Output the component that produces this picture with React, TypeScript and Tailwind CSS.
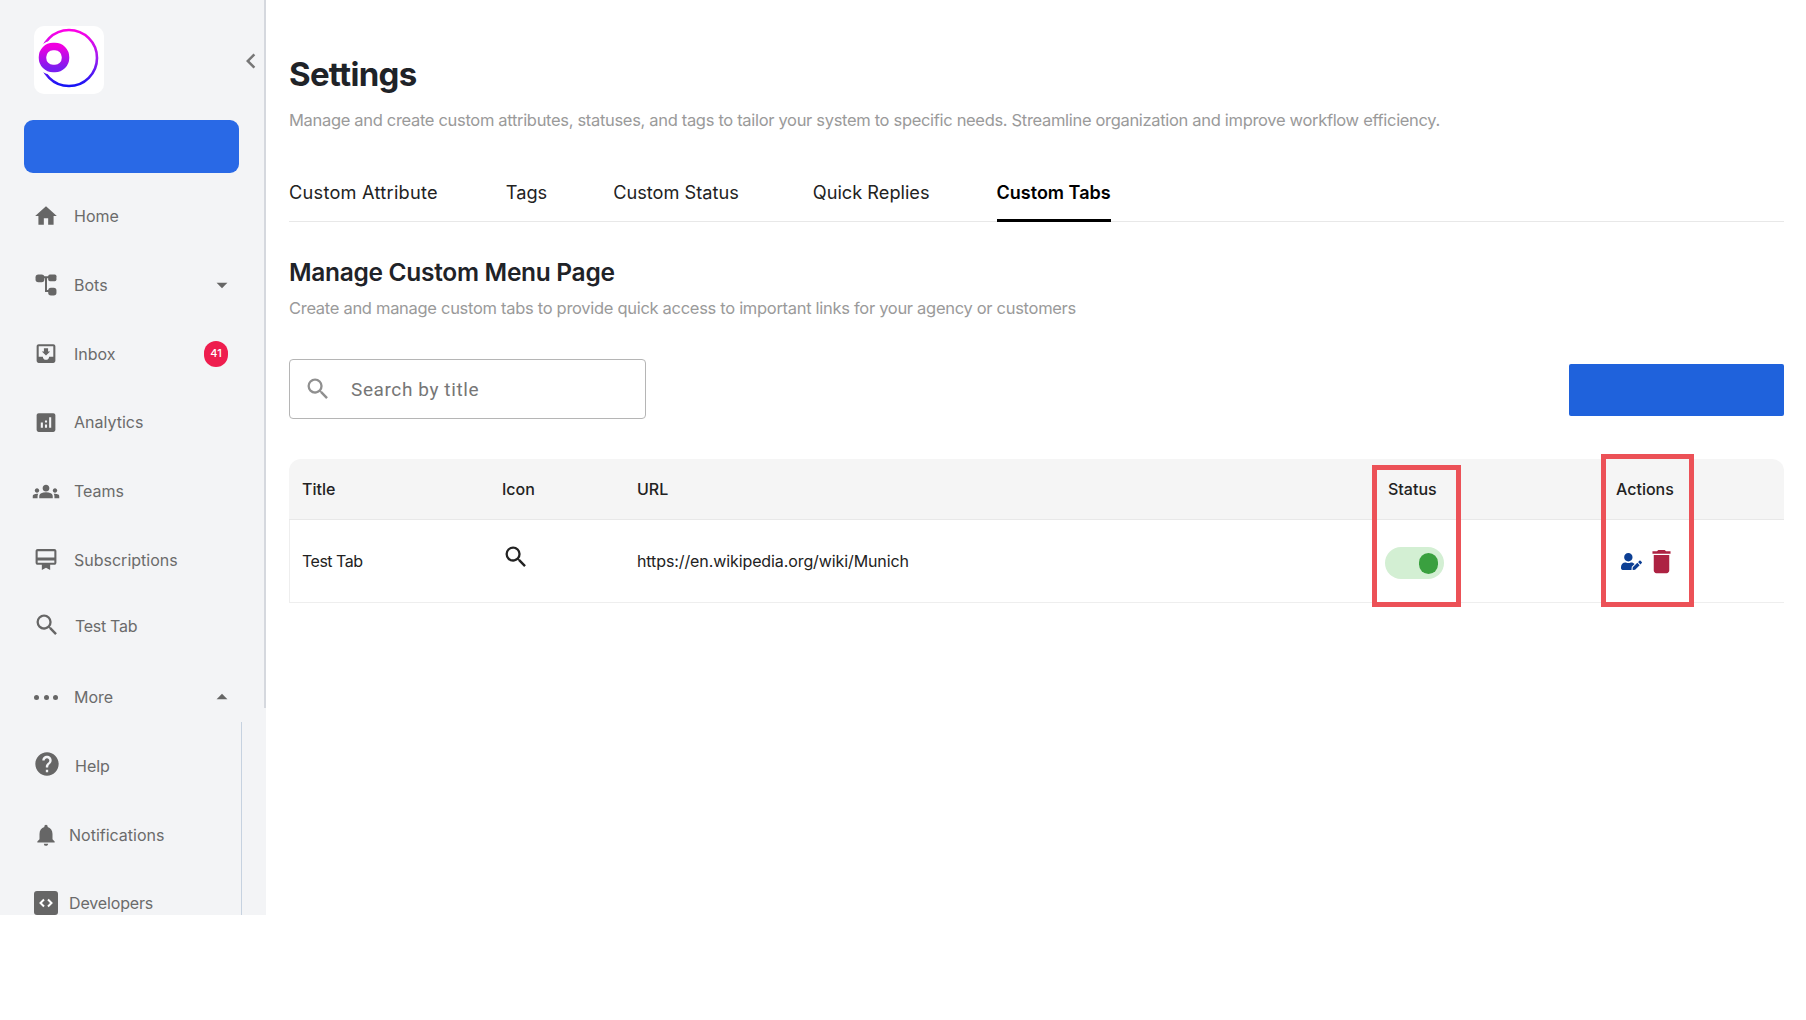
import type { ReactNode } from "react"
import {
  MdHome,
  MdMoveToInbox,
  MdAnalytics,
  MdGroups,
  MdCardMembership,
  MdSearch,
  MdHelp,
  MdNotifications,
  MdArrowDropDown,
  MdArrowDropUp,
  MdChevronLeft,
  MdDelete,
} from "react-icons/md"
import { FaUserEdit } from "react-icons/fa"

/* ─── Drawn icons ────────────────────────────────────────────────────────── */

function Logo() {
  return (
    <svg viewBox="0 0 70 68" className="h-[68px] w-[70px]">
      <defs>
        <linearGradient id="ring" x1="0" y1="0" x2="0" y2="1">
          <stop offset="0" stopColor="#ff00e6" />
          <stop offset="0.5" stopColor="#a01cf0" />
          <stop offset="1" stopColor="#1414f5" />
        </linearGradient>
        <linearGradient id="dot" x1="0" y1="0" x2="0" y2="1">
          <stop offset="0" stopColor="#f000e0" />
          <stop offset="1" stopColor="#7a1ef0" />
        </linearGradient>
      </defs>
      <circle cx="35" cy="32" r="28" fill="none" stroke="url(#ring)" strokeWidth="2.6" />
      <rect x="3" y="15" width="34" height="34" rx="15" fill="#fff" />
      <rect x="8.5" y="20.5" width="23" height="22" rx="10.5" fill="none" stroke="url(#dot)" strokeWidth="7.5" />
    </svg>
  )
}

function BotsIcon() {
  return (
    <svg viewBox="0 0 20 20" className="h-[22px] w-[22px]" fill="#666">
      <rect x="0.5" y="0.5" width="8" height="7" rx="2.5" />
      <rect x="12" y="0.5" width="7.5" height="6" rx="1.5" />
      <rect x="12" y="12.5" width="7.5" height="7" rx="2.5" />
      <path d="M8 3h5M10 3v12.5h3" fill="none" stroke="#666" strokeWidth="1.8" />
    </svg>
  )
}

function MoreIcon() {
  return (
    <span className="flex w-6 items-center justify-between">
      <span className="h-[5px] w-[5px] rounded-full bg-[#666]" />
      <span className="h-[5px] w-[5px] rounded-full bg-[#666]" />
      <span className="h-[5px] w-[5px] rounded-full bg-[#666]" />
    </span>
  )
}

function DevelopersIcon() {
  return (
    <svg viewBox="0 0 24 24" className="h-6 w-6">
      <rect width="24" height="24" rx="3" fill="#666" />
      <path d="M10 8.5 6.5 12l3.5 3.5M14 8.5l3.5 3.5-3.5 3.5" fill="none" stroke="#fff" strokeWidth="2" />
    </svg>
  )
}

/* ─── Sidebar ────────────────────────────────────────────────────────────── */

type NavItem = {
  label: string
  icon: ReactNode
  rowClass: string
  after?: ReactNode
}

const navItems: NavItem[] = [
  { label: "Home", icon: <MdHome size={26} color="#666" />, rowClass: "pl-[74px]" },
  { label: "Bots", icon: <BotsIcon />, rowClass: "pl-[74px]", after: <MdArrowDropDown size={26} color="#666" /> },
  {
    label: "Inbox",
    icon: <MdMoveToInbox size={25} color="#666" />,
    rowClass: "pl-[74px]",
    after: (
      <span className="mr-[7px] flex h-[26px] w-6 items-center justify-center rounded-full bg-[#ee1d4e] text-[11px] font-medium text-white">
        41
      </span>
    ),
  },
  { label: "Analytics", icon: <MdAnalytics size={25} color="#666" />, rowClass: "pl-[74px]" },
  { label: "Teams", icon: <MdGroups size={27} color="#666" />, rowClass: "pl-[74px]" },
  { label: "Subscriptions", icon: <MdCardMembership size={25} color="#666" />, rowClass: "pl-[74px]" },
  {
    label: "Test Tab",
    icon: <MdSearch size={28} color="#666" className="translate-x-px -translate-y-px" />,
    rowClass: "-mt-[2px] mb-[2px] pl-[75px] tracking-[-0.3px]",
  },
  { label: "More", icon: <MoreIcon />, rowClass: "pl-[74px]", after: <MdArrowDropUp size={26} color="#666" /> },
  {
    label: "Help",
    icon: <MdHelp size={28} color="#666" className="translate-x-px -translate-y-[2px]" />,
    rowClass: "pl-[75px]",
  },
  { label: "Notifications", icon: <MdNotifications size={26} color="#666" />, rowClass: "pl-[69px]" },
  { label: "Developers", icon: <DevelopersIcon />, rowClass: "pl-[69px] tracking-[-0.15px]" },
]

function Sidebar() {
  return (
    <aside className="relative h-[915px] w-[266px] shrink-0 overflow-hidden bg-[#f3f4f6]">
      <div className="absolute right-0 top-0 h-[708px] w-[2px] bg-[#d5d8de]" />
      <div className="absolute left-[241px] top-[722px] bottom-0 w-px bg-[#c6d2e0]" />

      <div className="flex h-[120px] items-start pl-[34px] pt-[26px]">
        <div className="rounded-[10px] bg-white">
          <Logo />
        </div>
        <MdChevronLeft size={30} color="#777" className="ml-[132px] mt-5" />
      </div>

      <div className="ml-6 h-[53px] w-[215px] rounded-[9px] bg-[#2969e6]" />

      <nav className="flex flex-col pt-[9px]">
        {navItems.map((item) => (
          <div
            key={item.label}
            className={`relative flex h-[68.7px] items-center pr-[31px] text-base text-[#6b6b6b] ${item.rowClass}`}
          >
            <span className="absolute left-[46px] flex -translate-x-1/2 items-center justify-center">
              {item.icon}
            </span>
            <span className="flex-1">{item.label}</span>
            {item.after}
          </div>
        ))}
      </nav>
    </aside>
  )
}

/* ─── Main ───────────────────────────────────────────────────────────────── */

const tabs = [
  { label: "Custom Attribute", className: "mr-[68px] pb-[10px] tracking-[0.25px]" },
  { label: "Tags", className: "mr-[66px] pb-[10px]" },
  { label: "Custom Status", className: "mr-[74px] pb-[10px]" },
  { label: "Quick Replies", className: "mr-[67px] pb-[10px]" },
  { label: "Custom Tabs", className: "border-b-[3px] border-black pb-[7px] text-lg font-semibold text-black" },
]

function StatusToggle() {
  return (
    <div className="mt-1 flex h-8 w-[59px] items-center justify-end rounded-full bg-[#d3efd3] pr-[6px]">
      <span className="h-[21px] w-[19px] rounded-full bg-[#3aa03f]" />
    </div>
  )
}

function TabsTable() {
  return (
    <div className="relative mt-[40px]">
      <div className="grid h-[61px] grid-cols-[200px_135px_751px_228px_1fr] items-center rounded-t-xl border-b border-[#e8e8e8] bg-[#f5f5f5] pl-[13px] text-base font-medium text-[#222]">
        <div>Title</div>
        <div>Icon</div>
        <div>URL</div>
        <div>Status</div>
        <div>Actions</div>
      </div>
      <div className="grid h-[83px] grid-cols-[200px_135px_751px_228px_1fr] items-center border-b border-l border-[#eeeeee] pl-[12px] text-base text-[#222]">
        <div className="tracking-[-0.5px]">Test Tab</div>
        <div className="-mt-2">
          <MdSearch size={28} color="#222" />
        </div>
        <div className="tracking-[-0.1px]">https://en.wikipedia.org/wiki/Munich</div>
        <div className="-ml-[3px]">
          <StatusToggle />
        </div>
        <div className="flex items-center gap-[10px] pl-[5px]">
          <FaUserEdit size={21} color="#0d3f94" />
          <MdDelete size={31} color="#ad2242" className="-ml-[6px]" />
        </div>
      </div>

      {/* red annotation boxes */}
      <div className="absolute left-[1083px] top-[6px] h-[142px] w-[89px] border-[5px] border-[#ec5157]" />
      <div className="absolute left-[1312px] top-[-5px] h-[153px] w-[93px] border-[5px] border-[#ec5157]" />
    </div>
  )
}

export default function App() {
  return (
    <div className="flex min-h-[1020px] bg-white font-['Inter',sans-serif]">
      <Sidebar />
      <main className="ml-[23px] w-[1495px] pt-[51px]">
        <h1 className="text-[33px] font-bold leading-[46px] tracking-[-0.7px] text-[#1f2328]">Settings</h1>
        <p className="mt-[11px] text-[16.5px] leading-[24px] tracking-[-0.32px] text-[#9a9a9a]">
          Manage and create custom attributes, statuses, and tags to tailor your system to specific needs. Streamline
          organization and improve workflow efficiency.
        </p>

        <div className="mt-[41px] flex h-[49px] items-stretch border-b border-[#e8e8e8] text-[18.2px] text-[#222]">
          {tabs.map((tab) => (
            <div key={tab.label} className={`-mb-px flex items-center ${tab.className}`}>
              {tab.label}
            </div>
          ))}
        </div>

        <h2 className="mt-[32px] text-[24.5px] font-semibold leading-[36px] tracking-[-0.3px] text-[#1f2328]">
          Manage Custom Menu Page
        </h2>
        <p className="mt-[6px] text-[16.5px] leading-[24px] tracking-[-0.3px] text-[#9a9a9a]">
          Create and manage custom tabs to provide quick access to important links for your agency or customers
        </p>

        <div className="mt-[39px] flex items-center justify-between">
          <div className="flex h-[60px] w-[357px] items-center rounded border border-[#b5b5b5] pl-[14px]">
            <MdSearch size={28} color="#8f8f8f" />
            <span className="ml-[19px] pt-[2px] font-['Roboto',sans-serif] text-[19px] tracking-[0.6px] text-[#767676]">
              Search by title
            </span>
          </div>
          <div className="mt-[2px] h-[52px] w-[215px] rounded-[2px] bg-[#1f62dc]" />
        </div>

        <TabsTable />
      </main>
    </div>
  )
}
